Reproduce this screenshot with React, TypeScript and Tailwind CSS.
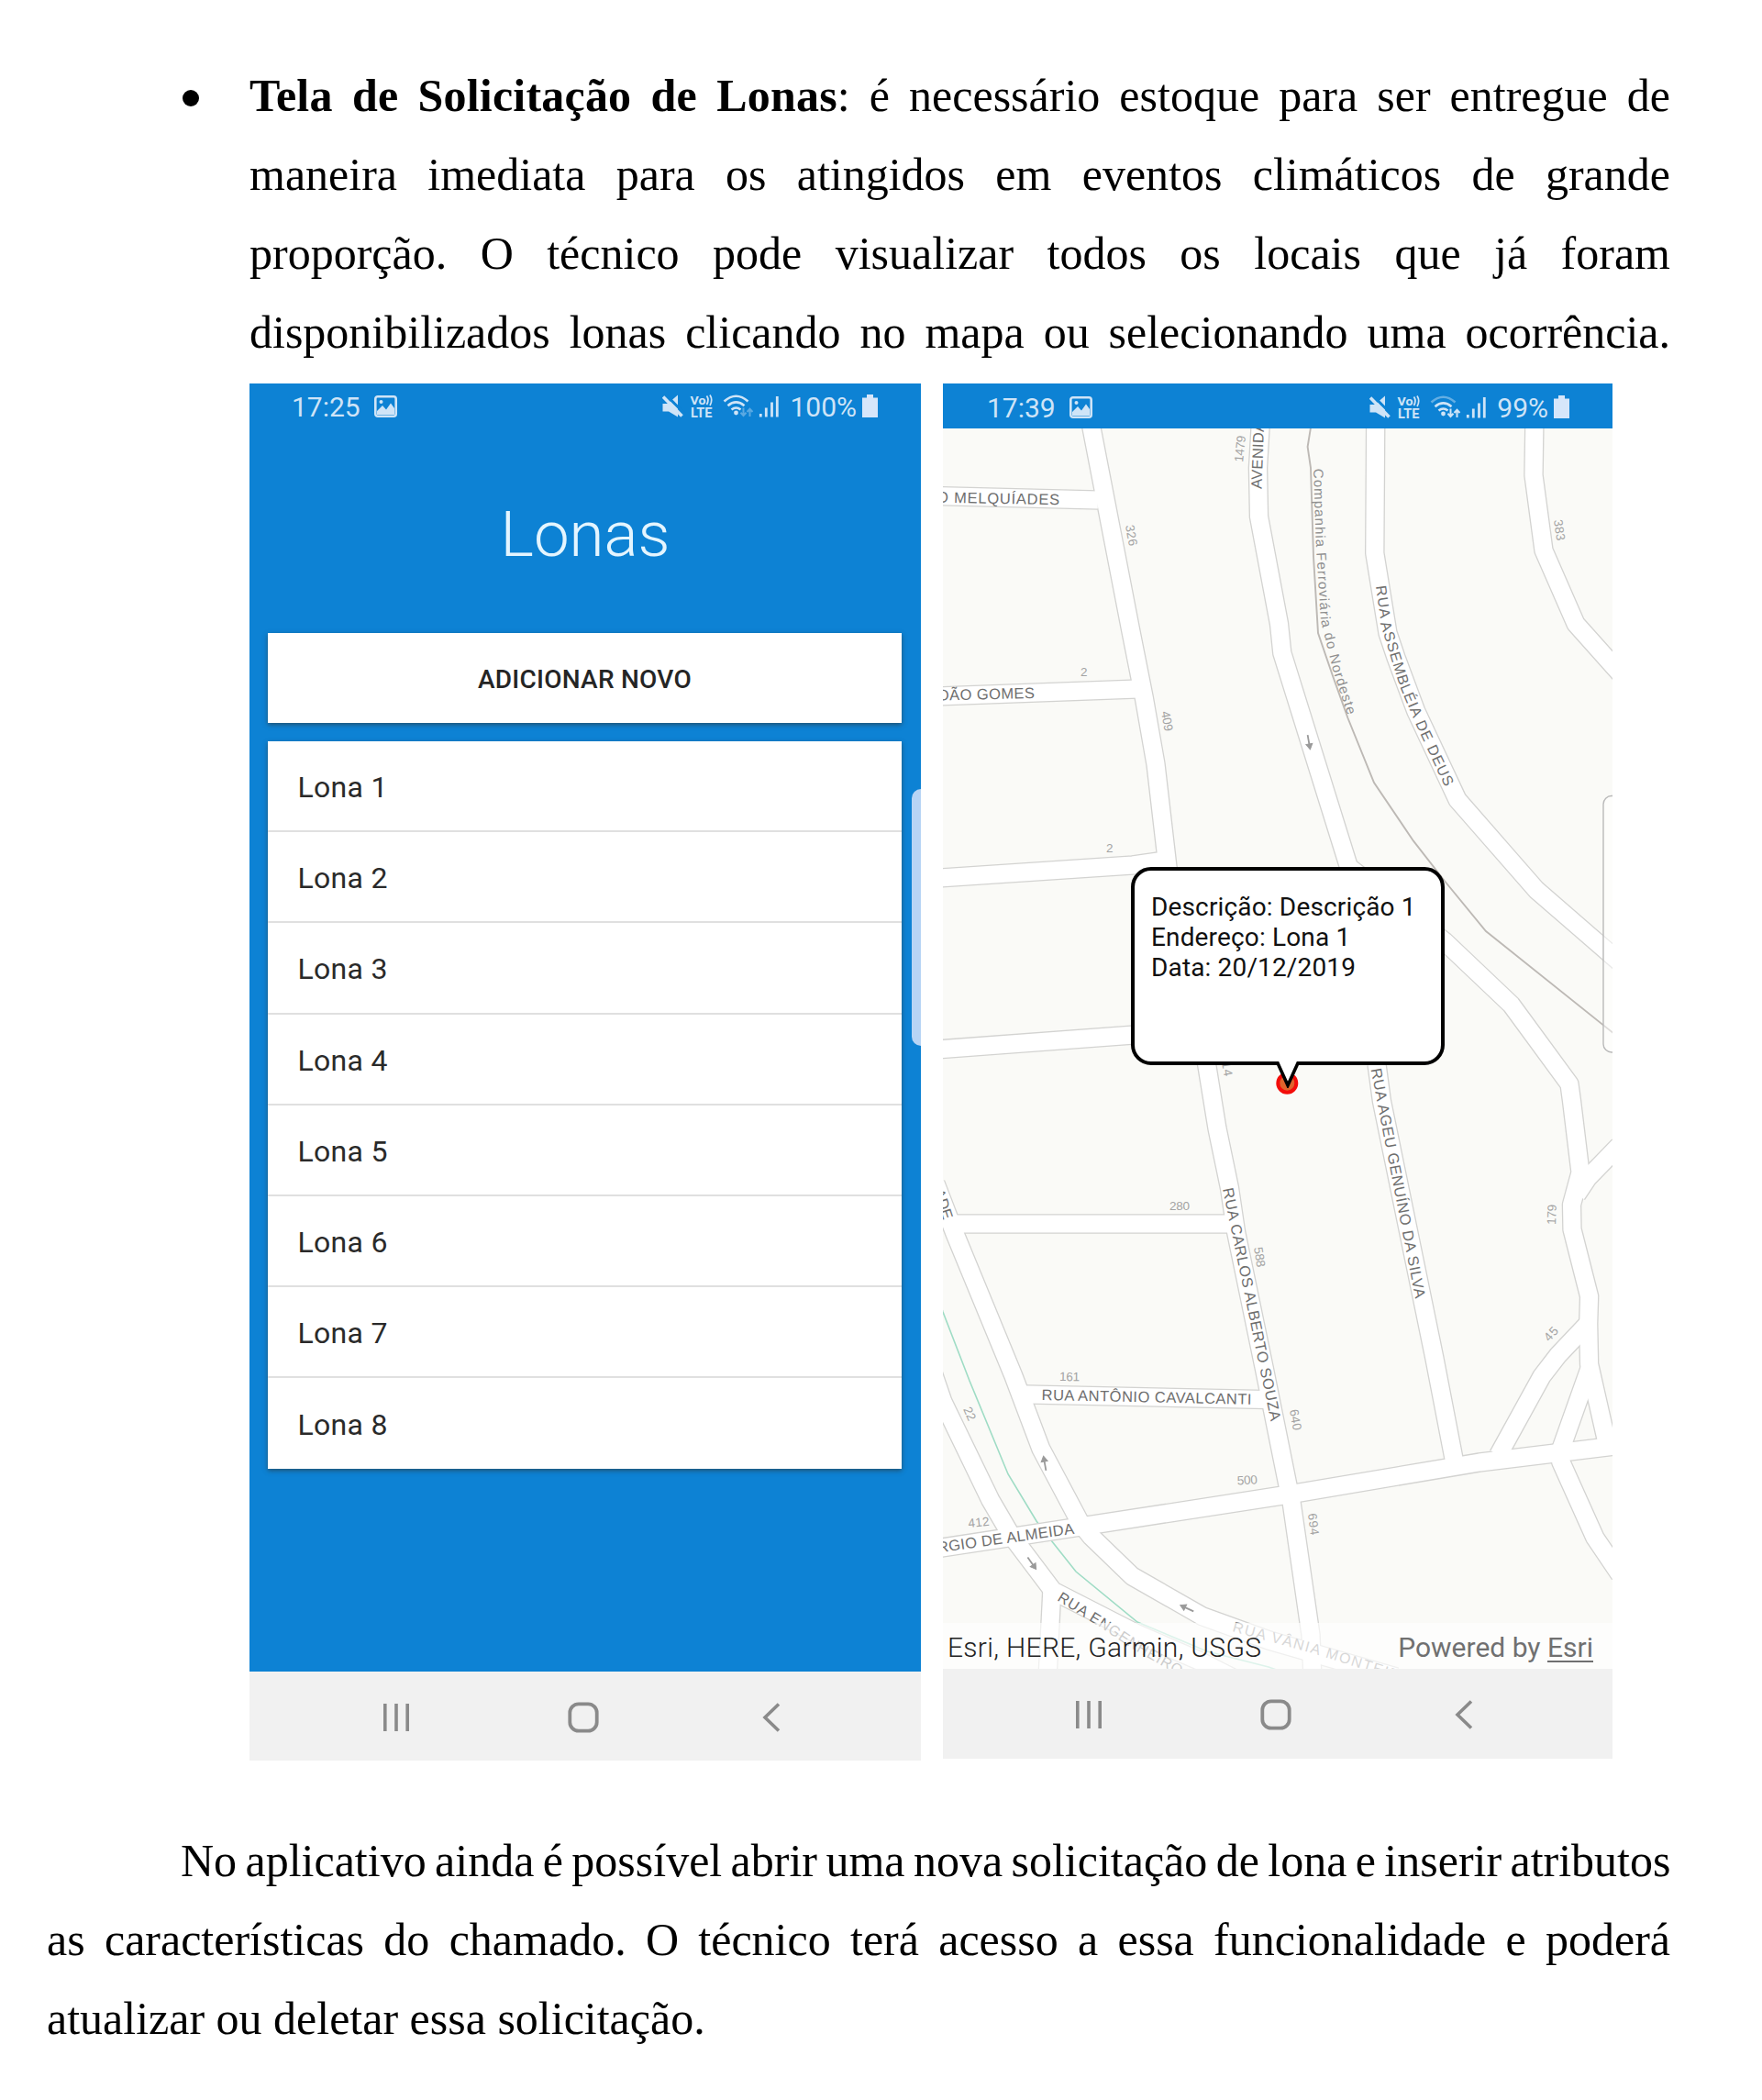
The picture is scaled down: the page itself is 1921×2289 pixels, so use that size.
import React from "react";

const LONAS = ["Lona 1", "Lona 2", "Lona 3", "Lona 4", "Lona 5", "Lona 6", "Lona 7", "Lona 8"];

/* Street centre lines, in the map's own coordinate space. */
const STREETS = [
  "M1188.8 460L1233.3 690L1247.2 760L1260 833L1273 945L1315.6 1160L1327 1230L1340.5 1295L1347.6 1343L1378 1490L1403.6 1617L1408 1637L1429 1782L1431 1830",
  "M1020 540.5L1197 545",
  "M1020 759L1240 751",
  "M1020 957.3L1235 943L1270 938",
  "M1020 1144L1233 1128.3L1308 1122",
  "M1036 1334L1345 1334",
  "M1020 1290L1041 1344.7L1105 1500L1134.8 1579L1177.8 1660L1189.8 1675L1234.3 1718L1310.8 1761.7L1383.5 1788L1522 1828",
  "M1110 1519.8L1380 1525.5",
  "M1015 1490L1028 1528L1079.8 1635L1102 1673L1148 1734L1240 1781L1307 1810L1350 1832",
  "M1147 1730L1142 1830",
  "M1020 1688L1178 1664L1405 1629L1613 1594L1765 1575.5",
  "M1501 1160L1506.4 1200L1563.8 1480L1586 1595",
  "M1374.4 460L1371.5 510L1372.5 563L1394.5 680L1397.8 711.7L1470.5 945L1574.8 1026L1647.5 1095L1711 1181.7L1713.5 1200L1723 1278L1713.5 1313L1714 1340L1732.6 1413L1731.7 1443L1732.6 1487L1751.8 1572",
  "M1765 1249L1731 1284L1719 1302",
  "M1731 1443L1699 1476.7L1681 1500L1633.6 1586",
  "M1733.6 1490L1701.6 1580L1701.6 1593L1738.9 1676L1766 1716",
  "M1499.7 460L1498.8 603L1513 690L1522 716.7L1543.7 775L1589 871.7L1640 930L1675 970L1765 1048",
  "M1672.9 460L1672 518L1683 600L1718 680L1768 736",
];

type Label = { t: string; x: number; y: number; r: number; len: number; size?: number; fill?: string };

const NUM = "#a3a3a3";
const LABELS: Label[] = [
  { t: "O MELQUÍADES", x: 1021, y: 547.5, r: 1.2, len: 134 },
  { t: "OÃO GOMES", x: 1022, y: 763.5, r: -1.4, len: 106 },
  { t: "AVENIDA", x: 1375.5, y: 533, r: -88, len: 73 },
  { t: "RUA AGEU GENUÍNO DA SILVA", x: 1494.5, y: 1165.5, r: 79, len: 255 },
  { t: "RUA CARLOS ALBERTO SOUZA", x: 1333, y: 1296, r: 78.3, len: 259 },
  { t: "RUA ANTÔNIO CAVALCANTI", x: 1135.5, y: 1526, r: 1.2, len: 229 },
  { t: "RGIO DE ALMEIDA", x: 1023, y: 1692.5, r: -8, len: 150 },
  { t: "ADE", x: 1018, y: 1298, r: 72, len: 34 },
  { t: "326", x: 1227, y: 573, r: 80, len: 23, size: 13.5, fill: NUM },
  { t: "1479", x: 1355, y: 504, r: -84, len: 29, size: 13.5, fill: NUM },
  { t: "409", x: 1266, y: 776, r: 80, len: 22, size: 13.5, fill: NUM },
  { t: "2", x: 1178, y: 736.5, r: 0, len: 7, size: 13.5, fill: NUM },
  { t: "2", x: 1206, y: 928.5, r: 0, len: 7, size: 13.5, fill: NUM },
  { t: "383", x: 1694, y: 567, r: 82, len: 23, size: 13.5, fill: NUM },
  { t: "14", x: 1332, y: 1158, r: 80, len: 16, size: 13.5, fill: NUM },
  { t: "588", x: 1367, y: 1360, r: 81, len: 22, size: 13.5, fill: NUM },
  { t: "280", x: 1275, y: 1318.5, r: 0, len: 22, size: 13.5, fill: NUM },
  { t: "179", x: 1696, y: 1335, r: -88, len: 22, size: 13.5, fill: NUM },
  { t: "45", x: 1689, y: 1463, r: -48, len: 16, size: 13.5, fill: NUM },
  { t: "161", x: 1155, y: 1505, r: 1, len: 22, size: 13.5, fill: NUM },
  { t: "22", x: 1050, y: 1536, r: 66, len: 15, size: 13.5, fill: NUM },
  { t: "640", x: 1406, y: 1537, r: 80, len: 23, size: 13.5, fill: NUM },
  { t: "500", x: 1349, y: 1618.5, r: -3, len: 22, size: 13.5, fill: NUM },
  { t: "694", x: 1426, y: 1650, r: 83, len: 24, size: 13.5, fill: NUM },
  { t: "412", x: 1056, y: 1665, r: -6, len: 23, size: 13.5, fill: NUM },
];

const CURVED = [
  { id: "rail", d: "M1432 511L1434.5 590L1440 677L1453 730L1474 795", t: "Companhia Ferroviária do Nordeste", len: 273, fill: "#8f8f8f", size: 15 },
  { id: "assembleia", d: "M1500 639L1506 683L1525.5 746.7L1546 795L1582 872", t: "RUA ASSEMBLÉIA DE DEUS", len: 233, fill: "#6e6e6e", size: 16 },
  { id: "engenheiro", d: "M1152 1744L1200 1774L1236 1798L1320 1846", t: "RUA ENGENHEIRO", len: 157, fill: "#6e6e6e", size: 16 },
  { id: "vania", d: "M1343 1778L1431 1802L1570 1846", t: "RUA VÂNIA MONTEIRO", len: 203, fill: "#8c8c8c", size: 16 },
];

const ARROWS = [
  { x: 1427, y: 809, r: 80 },
  { x: 1139, y: 1595, r: -100 },
  { x: 1125, y: 1704, r: 55 },
  { x: 1294, y: 1753, r: -155 },
];

function StreetMap() {
  return (
    <svg className="block h-[1352px] w-[730px]" viewBox="1028 467 730 1352">
      <rect x="1028" y="467" width="730" height="1352" fill="#fafaf7" />
      <path d="M1020 1405L1028 1430L1057 1505L1099 1606.7L1130 1658L1146.8 1680L1173 1713L1240 1768L1316 1800L1383 1817L1420 1830" fill="none" stroke="#9fdcc5" strokeWidth="1.6" />
      {STREETS.map((d) => (
        <path key={d} d={d} fill="none" stroke="#d3d3d1" strokeWidth="21.6" strokeLinejoin="round" />
      ))}
      {STREETS.map((d) => (
        <path key={d} d={d} fill="none" stroke="#fff" strokeWidth="19" strokeLinejoin="round" />
      ))}
      <path d="M1429 466L1425.6 487L1429 510L1432 606.7L1437 690L1453 736.7L1469.6 783L1498 853L1541 916.7L1574.8 960L1620 1015L1760 1127" fill="none" stroke="#bdb9b5" strokeWidth="1.9" />
      <g fontFamily="Liberation Sans, sans-serif">
        {LABELS.map((l, i) => (
          <text key={i} transform={`translate(${l.x} ${l.y}) rotate(${l.r})`} fontSize={l.size ?? 16.5} fill={l.fill ?? "#6e6e6e"} textLength={l.len}>
            {l.t}
          </text>
        ))}
        {CURVED.map((c) => (
          <g key={c.id}>
            <path id={c.id} d={c.d} fill="none" />
            <text fontSize={c.size} fill={c.fill} textLength={c.len}>
              <textPath href={`#${c.id}`} textLength={c.len}>{c.t}</textPath>
            </text>
          </g>
        ))}
      </g>
      {ARROWS.map((a) => (
        <g key={a.x} transform={`translate(${a.x} ${a.y}) rotate(${a.r})`} stroke="#9a9a9a" strokeWidth="1.8" fill="#9a9a9a">
          <path d="M-8 0H4" />
          <path d="M2 -3.5L8 0L2 3.5Z" strokeWidth="1" />
        </g>
      ))}
      <path d="M1760 867.5H1757a9 9 0 0 0-9 9V1138a9 9 0 0 0 9 9H1760" fill="#fff" fillOpacity="0.5" stroke="#b9b9b9" strokeWidth="1.4" />
      <circle cx="1403.3" cy="1180.7" r="10" fill="#e0632c" stroke="#f30d0a" strokeWidth="4" />
    </svg>
  );
}

function StatusIcons({ dim }: { dim: boolean }) {
  return (
    <svg className="block h-[26px] w-[128px]" viewBox="0 0 128 26" fill="none">
      <path d="M0.500 10H6L17 0.500V24.500L7 18.500H0.500Z" fill="#cfe4f7" />
      <path d="M2 -1.500L25 21.500" stroke="#0d82d4" strokeWidth="3" />
      <path d="M17 14L24 21V26H17Z" fill="#0d82d4" />
      <path d="M1 2.500L21.500 23.500" stroke="#cfe4f7" strokeWidth="3.600" />
      <text x="30.500" y="11" fontFamily="Roboto" fontSize="13.500" fontWeight="700" fill="#cfe4f7" textLength="17" lengthAdjust="spacingAndGlyphs">Vo</text>
      <path d="M48.500 1.500Q51.500 6 48.500 11M52 0.500Q55.500 6 52 12" stroke="#cfe4f7" strokeWidth="1.700" />
      <text x="31" y="24.700" fontFamily="Roboto" fontSize="14" fontWeight="700" fill="#cfe4f7" textLength="23.500" lengthAdjust="spacingAndGlyphs">LTE</text>
      <path d="M67.500 7.500Q80.500 -4 93.500 7.500" stroke="#cfe4f7" strokeWidth="2.600" opacity={dim ? 0.45 : 1} />
      <path d="M71.500 12.200Q80.500 4.500 89.500 12.200M75.500 16.500Q80.500 12.500 85.500 16.500" stroke="#cfe4f7" strokeWidth="2.600" />
      <circle cx="80.500" cy="20" r="2.400" fill="#cfe4f7" />
      <g stroke="#cfe4f7" strokeWidth="2" opacity={dim ? 1 : 0.4}>
        <path d="M88.500 14.500V23M85.500 19.800L88.500 23L91.500 19.800M95.500 24V16M92.500 19L95.500 15.800L98.500 19" />
      </g>
      <path d="M107.300 21V24.500M113.300 14.500V24.500M119.500 8.500V24.500M125.300 2V24.500" stroke="#cfe4f7" strokeWidth="2.800" />
    </svg>
  );
}

function StatusBar({ time, battery, className, dim }: { time: string; battery: string; className: string; dim: boolean }) {
  return (
    <div className={`flex h-[49px] items-start justify-between bg-[#0d82d4] text-[30px] leading-[28px] text-[#cfe4f7] ${className}`}>
      <div className="flex gap-[15px]">
        <span>{time}</span>
        <svg className="mt-[1px] block h-[24px] w-[25px]" viewBox="0 0 25 24">
          <rect x="1.300" y="1.300" width="22.400" height="21.400" rx="2.500" fill="none" stroke="#cfe4f7" strokeWidth="2.600" />
          <path d="M3 21V17L9 11L13 15.500L18 8.500L22 14V21Z" fill="#cfe4f7" />
          <circle cx="7.500" cy="7" r="2" fill="#cfe4f7" />
        </svg>
      </div>
      <div className="flex">
        <StatusIcons dim={dim} />
        <span className="ml-[11px]">{battery}</span>
        <svg className="ml-[6px] block h-[26px] w-[17px]" viewBox="0 0 17 26">
          <path d="M5 0H12V3.500H17V25H0V3.500H5Z" fill="#d6e6fa" />
        </svg>
      </div>
    </div>
  );
}

function NavBar({ className }: { className: string }) {
  return (
    <div className={`flex items-start bg-[#f1f1f1] pt-[33px] ${className}`}>
      <svg className="block h-[34px] w-[28px]" viewBox="0 0 28 34" stroke="#8a8a8a" strokeWidth="3.600">
        <path d="M1.800 2V32M14 2V32M26.200 2V32" />
      </svg>
      <svg className="ml-[173px] block h-[34px] w-[34px]" viewBox="0 0 34 34" fill="none" stroke="#8a8a8a" strokeWidth="3.800">
        <rect x="2.300" y="2.300" width="29.400" height="29.400" rx="9.500" />
      </svg>
      <svg className="ml-[178px] block h-[34px] w-[20px]" viewBox="0 0 20 34" fill="none" stroke="#8a8a8a" strokeWidth="3.600">
        <path d="M18 2.500L3 17L18 31.500" />
      </svg>
    </div>
  );
}

function ListScreen() {
  return (
    <div className="relative flex h-[1501px] w-[732px] flex-col bg-[#0d82d4]">
      <StatusBar time="17:25" battery="100%" dim={false} className="pt-[12px] pr-[47px] pl-[46px]" />
      <h1 className="mt-[76px] h-[80px] text-center text-[69px] leading-[80px] font-light text-[#e4f5ff]">Lonas</h1>
      <div className="mr-[21px] ml-[20px] mt-[67px] flex h-[98px] items-center justify-center bg-white pt-[3px] text-[28px] font-medium tracking-[0.25px] text-[#252525] shadow-[0_2px_5px_rgba(40,60,70,0.7)]">
        ADICIONAR NOVO
      </div>
      <div className="mr-[21px] ml-[20px] mt-[20px] h-[793px] divide-y-2 divide-[#e0e0e0] bg-white shadow-[0_2px_5px_rgba(40,60,70,0.7)]">
        {LONAS.map((name) => (
          <div key={name} className="flex h-[99.200px] items-center pt-[3px] pl-[32.500px] text-[32px] tracking-[0.3px] text-[#2a2a2a]">
            {name}
          </div>
        ))}
      </div>
      <NavBar className="mt-auto h-[97px] pl-[146px]" />
      <div className="absolute top-[442px] right-0 h-[280px] w-[10px] rounded-l-[10px] bg-[#b7d4f5]" />
    </div>
  );
}

function MapScreen() {
  return (
    <div className="flex h-[1499px] w-[730px] flex-col">
      <StatusBar time="17:39" battery="99%" dim className="pt-[13px] pr-[47px] pl-[48px]" />
      <div className="relative h-[1352px] overflow-hidden">
        <StreetMap />
        <div className="absolute top-[478px] left-[205px] h-[216px] w-[342px] rounded-[22px] border-4 border-black bg-white pt-[23px] pl-[18px] text-[28px] leading-[33px] tracking-[0.15px] whitespace-nowrap text-[#111]">
          <p>Descrição: Descrição 1</p>
          <p>Endereço: Lona 1</p>
          <p>Data: 20/12/2019</p>
          <svg className="absolute top-[205px] left-[150px] h-[32px] w-[34px]" viewBox="0 0 34 32">
            <path d="M5.500 2L17 27L28.500 2V0H5.500Z" fill="#fff" />
            <path d="M3 4.800H6L17 29L28 4.800H31" fill="none" stroke="#000" strokeWidth="3.600" />
          </svg>
        </div>
        <div className="absolute bottom-0 left-0 flex h-[50px] w-full items-center justify-between bg-white/65 pt-[2px] pr-[21px] pl-[5px] text-[30px]">
          <span className="font-light tracking-[0.3px] text-[#222]">Esri, HERE, Garmin, USGS</span>
          <span className="text-[#707070]">
            Powered by <span className="underline decoration-2 underline-offset-4">Esri</span>
          </span>
        </div>
      </div>
      <NavBar className="h-[98px] pl-[145px]" />
    </div>
  );
}

function Line({ children, className = "" }: { children: React.ReactNode; className?: string }) {
  return <span className={`block whitespace-nowrap [text-align-last:justify] ${className}`}>{children}</span>;
}

export default function App() {
  return (
    <div className="flex h-[2289px] w-[1921px] flex-col overflow-hidden bg-white pt-[61px] font-['Liberation_Serif',serif] text-[50px] leading-[86px] text-black">
      <div className="flex h-[344px] w-[1821px]">
        <div className="flex h-[86px] w-[272px] items-center pl-[199px]">
          <span className="mt-[5px] h-[18px] w-[18px] rounded-full bg-black" />
        </div>
        <p className="w-[1549px]">
          <Line><b className="tracking-[0.2px]">Tela de Solicitação de Lonas</b>: é necessário estoque para ser entregue de</Line>
          <Line>maneira imediata para os atingidos em eventos climáticos de grande</Line>
          <Line>proporção. O técnico pode visualizar todos os locais que já foram</Line>
          <Line>disponibilizados lonas clicando no mapa ou selecionando uma ocorrência.</Line>
        </p>
      </div>
      <div className="mt-[13px] ml-[272px] flex h-[1501px] gap-[24px] font-['Roboto',sans-serif] leading-normal">
        <ListScreen />
        <MapScreen />
      </div>
      <p className="mt-[66px] ml-[51px] w-[1770px]">
        <Line className="pl-[146px] [word-spacing:-3.1px]">No aplicativo ainda é possível abrir uma nova solicitação de lona e inserir atributos</Line>
        <Line>as características do chamado. O técnico terá acesso a essa funcionalidade e poderá</Line>
        <span className="block">atualizar ou deletar essa solicitação.</span>
      </p>
    </div>
  );
}
